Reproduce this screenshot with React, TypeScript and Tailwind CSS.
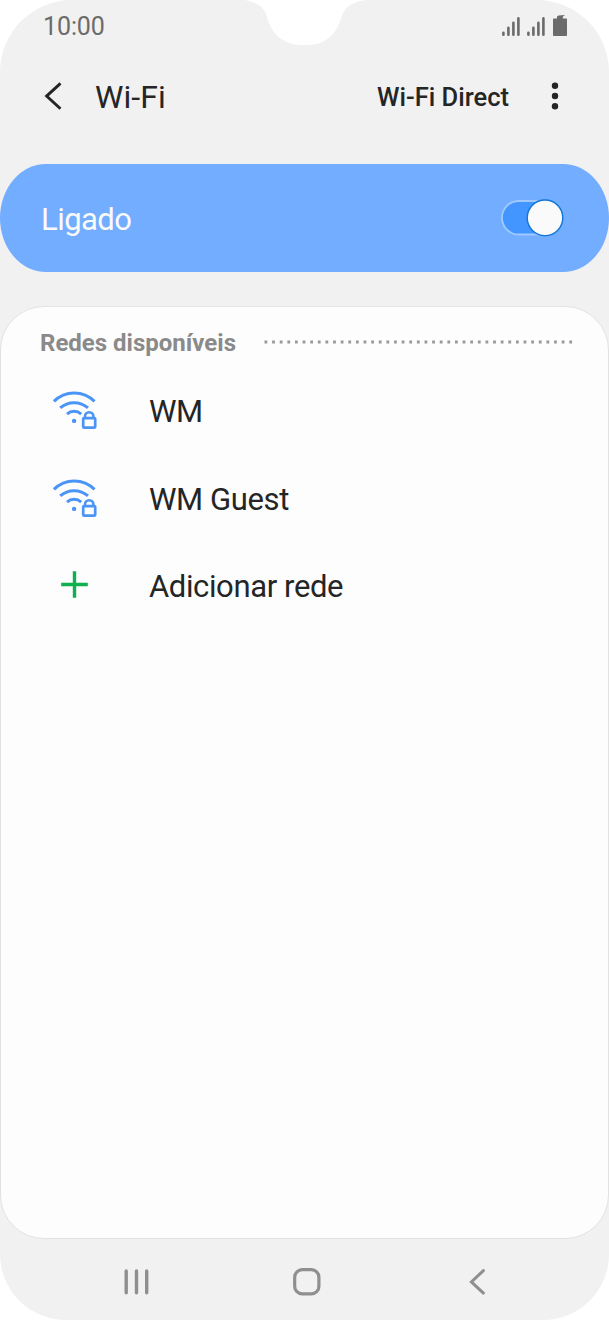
function SignalIcon() {
  return (
    <svg width="18" height="20" viewBox="0 0 18 20" fill="none" stroke="#6b6b6b" strokeWidth="2.6" strokeLinecap="round">
      <path d="M1.4 15.8V17.7M6.4 10.9V17.7M11.4 5.9V17.7M16.4 1.4V17.7" />
    </svg>
  );
}

function BatteryIcon() {
  return (
    <svg width="14" height="22" viewBox="0 0 14 22" fill="#6b6b6b">
      <path d="M4 3.6V1.6L5.5 .6L12 0L9.8 1.8V3.6H13.2Q14 3.6 14 4.4V20.2Q14 21 13.2 21H.8Q0 21 0 20.2V4.4Q0 3.6 .8 3.6Z" />
    </svg>
  );
}

function SecureWifiIcon() {
  return (
    <svg className="mb-[4px]" width="46" height="40" viewBox="0 0 46 40" fill="none" stroke="#4a95f5" strokeWidth="3">
      <path d="M1.9 11.4A28.6 28.6 0 0 1 42.5 11.4M8.2 17.9A21 21 0 0 1 36 17.9M15 24.1A10.6 10.6 0 0 1 29.2 24.1" />
      <circle cx="22.1" cy="30.9" r="2.2" fill="#4a95f5" stroke="none" />
      <rect x="31.2" y="28.1" width="12" height="9.6" rx="1" strokeWidth="2.7" />
      <path d="M33 28V26.6A4.2 4.4 0 0 1 41.4 26.6V28" strokeWidth="2.6" />
    </svg>
  );
}

function NetworkRow({ name }: { name: string }) {
  return (
    <li className="flex h-[88px] items-center pl-[51px]">
      <SecureWifiIcon />
      <span className="ml-[51px]">{name}</span>
    </li>
  );
}

export default function App() {
  return (
    <div className="h-[1320px] w-[609px] bg-white font-['Roboto',sans-serif] text-[#252525]">
      <div className="relative flex h-full flex-col overflow-hidden rounded-t-[72px] rounded-b-[66px] bg-[#f1f1f1]">
        <svg className="absolute top-0 left-[240px]" width="130" height="46" viewBox="0 0 130 46" fill="#fff">
          <path d="M4 0C14 1 23 6 26 14C30 29 38 45.3 65 45.3C91 45.3 98 29 103 13C107 5 116 1 127 0Z" />
        </svg>

        <div className="flex h-[52px] items-center justify-between pr-[42px] pl-[43px] text-[#6b6b6b]">
          <span className="pt-[2px] text-[25px] leading-[50px] tracking-[-0.1px]">10:00</span>
          <div className="flex items-end">
            <SignalIcon />
            <span className="w-[7px]" />
            <SignalIcon />
            <span className="w-[8px]" />
            <BatteryIcon />
          </div>
        </div>

        <header className="flex h-[90px] items-center pr-[49px] pl-[44px]">
          <svg className="mb-[2px]" width="18" height="28" viewBox="0 0 18 28" fill="none" stroke="#252525" strokeWidth="2.9">
            <path d="M16.5 1.4L2.6 14.1L16.5 26.8" />
          </svg>
          <h1 className="ml-[33px] text-[32px] tracking-[0.1px]">Wi-Fi</h1>
          <span className="ml-auto pt-px text-[25.5px] font-medium">Wi-Fi Direct</span>
          <svg className="mb-[2px] ml-[41px]" width="10" height="28" viewBox="0 0 10 28" fill="#252525">
            <circle cx="5" cy="3.8" r="3.2" />
            <circle cx="5" cy="14" r="3.2" />
            <circle cx="5" cy="24.2" r="3.2" />
          </svg>
        </header>

        <section className="mt-[22px] flex h-[108px] items-center justify-between rounded-[46px/54px] bg-[#72adff] pr-[45px] pl-[41px]">
          <span className="pt-[4px] text-[31px] tracking-[-0.55px] text-[#fafafa]">Ligado</span>
          <svg width="64" height="38" viewBox="0 0 64 38">
            <rect x="2" y="2" width="56" height="33.5" rx="16.75" fill="#4396ff" stroke="#a1c9ff" strokeWidth="1.8" />
            <circle cx="45" cy="18.8" r="17.8" fill="#fafafa" stroke="#1176d8" strokeWidth="1.4" />
          </svg>
        </section>

        <main className="mt-[34px] h-[933px] shrink-0 rounded-[44px] border border-[#e2e2e2] bg-[#fdfdfd]">
          <div className="flex h-[61px] items-center pt-[9px] pr-[35px] pl-[39px]">
            <h2 className="pt-[2px] text-[24px] font-bold text-[#8a8a8a]">Redes disponíveis</h2>
            <svg className="ml-auto" width="309" height="4" viewBox="0 0 309 4">
              <path d="M.5 2H309" stroke="#999" strokeWidth="3" strokeDasharray="2.8 4.82" />
            </svg>
          </div>
          <ul className="text-[31px] tracking-[-0.38px]">
            <NetworkRow name="WM" />
            <NetworkRow name="WM Guest" />
            <li className="flex h-[84px] items-center pl-[60px]">
              <svg className="mb-[2px]" width="28" height="28" viewBox="0 0 28 28" stroke="#0eb050" strokeWidth="3.4">
                <path d="M13.5 .2V26.8M.2 13.5H26.8" />
              </svg>
              <span className="ml-[60px] pt-[2px]">Adicionar rede</span>
            </li>
          </ul>
        </main>

        <nav className="flex flex-1 items-center pt-[4px] pl-[123px]">
          <svg width="27" height="28" viewBox="0 0 27 28" stroke="#8f8f8f" strokeWidth="3.4" strokeLinecap="round">
            <path d="M3.2 3V24.7M13.5 3V24.7M23.7 3V24.7" />
          </svg>
          <svg className="ml-[142px]" width="30" height="28" viewBox="0 0 30 28" fill="none" stroke="#8f8f8f" strokeWidth="3.2">
            <rect x="2.7" y="1.7" width="24.2" height="24.2" rx="7.5" />
          </svg>
          <svg className="ml-[147px]" width="18" height="28" viewBox="0 0 18 28" fill="none" stroke="#8f8f8f" strokeWidth="3" strokeLinecap="round">
            <path d="M14.4 2.6L2.4 13.9L14.4 25.1" />
          </svg>
        </nav>
      </div>
    </div>
  );
}
